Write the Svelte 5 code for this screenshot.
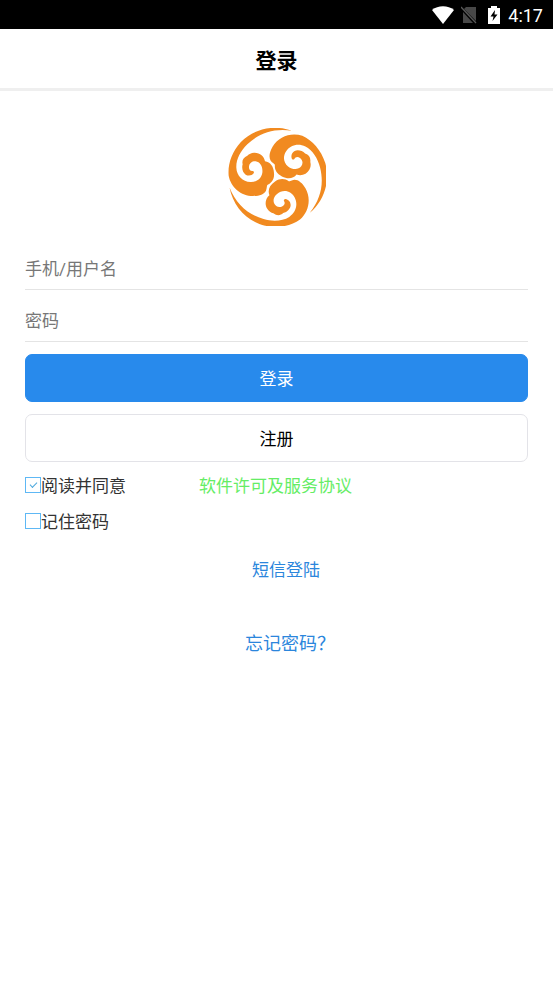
<script>
	let username = $state('');
	let password = $state('');
	let agreed = $state(true);
	let remember = $state(false);

	// the emblem is one cloud swirl repeated around the centre
	const swirls = [0, 120, 240];
</script>

<div class="page">
	<div class="status-bar">
		<svg class="wifi" viewBox="0 0 22 18" aria-hidden="true">
			<path d="M0 4C6-1 16-1 22 4L11 18Z" fill="#fff" />
		</svg>
		<svg class="sim" viewBox="0 0 16 18" aria-hidden="true">
			<path d="M5 1H15V15L3 3ZM2 6L12 17H2Z" fill="#484848" />
			<path d="M0 1L15 17" stroke="#5a5a5a" stroke-width="1.2" />
		</svg>
		<svg class="battery" viewBox="0 0 12 18" aria-hidden="true">
			<path d="M3 0H9V2H12V18H0V2H3Z" fill="#fff" />
			<path d="M7 4L2.500 10.500H5.500L4.500 15L9.500 8.500H6.500Z" fill="#000" />
		</svg>
		<span class="clock">4:17</span>
	</div>

	<header class="title-bar">
		<h1>登录</h1>
	</header>

	<main>
		<svg class="logo" viewBox="3 3 294 294" role="img" aria-label="logo">
			{#each swirls as angle (angle)}
				<path
					transform="rotate({angle} 150 150)"
					fill="#f18a20"
					d="M194 11C140-8 80 5 41 46C14 76 2 112 5 146C11 180 42 207 78 207C96 207 111 202 117 191C120 183 119 178 121 174C133 169 143 157 141 138C140 119 130 105 114 103C112 88 98 76 81 77C73 77 66 81 61 86C49 91 44 101 47 112C43 124 48 138 56 143C64 148 75 146 80 139C82 136 80 132 77 132C70 133 65 127 66 119C67 108 76 102 86 103C100 105 108 120 106 137C103 155 88 166 70 165C47 164 29 146 28 122C27 98 40 72 61 52C96 18 141 3 194 11Z"
				/>
			{/each}
		</svg>

		<form onsubmit={(event) => event.preventDefault()}>
			<input class="field" type="text" placeholder="手机/用户名" aria-label="手机/用户名" bind:value={username} />
			<input class="field" type="password" placeholder="密码" aria-label="密码" bind:value={password} />
			<button class="btn btn--primary" type="submit">登录</button>
			<button class="btn" type="button">注册</button>

			<div class="option-row">
				<label class="option">
					<input type="checkbox" bind:checked={agreed} />
					<span>阅读并同意</span>
				</label>
				<a class="agreement" href="#agreement">软件许可及服务协议</a>
			</div>
			<div class="option-row">
				<label class="option">
					<input type="checkbox" bind:checked={remember} />
					<span>记住密码</span>
				</label>
			</div>
		</form>

		<nav class="links">
			<a href="#sms">短信登陆</a>
			<a class="forgot" href="#forgot">忘记密码？</a>
		</nav>
	</main>
</div>

<style>
	:global(body) {
		margin: 0;
		background: #fff;
	}

	.page {
		min-height: 100vh;
		font-family: Roboto, 'Noto Sans CJK SC', sans-serif;
		font-size: 17px;
		line-height: 24px;
		color: #333;
	}

	.status-bar {
		display: flex;
		align-items: center;
		justify-content: flex-end;
		height: 29px;
		padding-right: 10px;
		background: #000;
		color: #fff;
	}

	.wifi {
		width: 22px;
		height: 18px;
		margin-right: 7px;
	}

	.sim {
		width: 16px;
		height: 18px;
		margin-right: 11px;
	}

	.battery {
		width: 12px;
		height: 18px;
		margin-right: 8px;
	}

	.clock {
		padding-top: 2px;
		font-size: 18px;
	}

	.title-bar {
		box-sizing: border-box;
		height: 62px;
		padding-top: 20px;
		border-bottom: 3px solid #efefef;
		text-align: center;
	}

	h1 {
		margin: 0;
		font-size: 21px;
		font-weight: 700;
		color: #000;
	}

	main {
		padding: 37px 25px 0;
	}

	.logo {
		display: block;
		width: 98px;
		height: 98px;
		margin: 0 auto 22px;
	}

	form {
		display: flex;
		flex-direction: column;
	}

	.field {
		box-sizing: border-box;
		width: 100%;
		height: 42px;
		margin-bottom: 10px;
		padding: 0;
		border: 0;
		border-bottom: 1px solid #e4e4e4;
		background: none;
		font: inherit;
		outline: none;
	}

	.field::placeholder {
		color: #777;
		opacity: 1;
	}

	.btn {
		height: 48px;
		margin: 2px 0 10px;
		padding: 2px 0 0;
		border: 1px solid #e3e3e8;
		border-radius: 7px;
		background: #fff;
		font: inherit;
		color: #000;
	}

	.btn--primary {
		border-color: #288aec;
		background: #288aec;
		color: #fff;
	}

	.option-row {
		display: flex;
		align-items: center;
		height: 24px;
		margin: 2px 0 10px;
	}

	.option {
		display: flex;
		align-items: center;
	}

	.option input {
		appearance: none;
		display: grid;
		place-items: center;
		box-sizing: border-box;
		width: 16px;
		height: 16px;
		margin: 0 0 2px;
		border: 1px solid #5eb8f5;
	}

	.option input:checked::before {
		content: '';
		width: 6px;
		height: 3px;
		border: solid #4da9dd;
		border-width: 0 0 1px 1px;
		transform: translateY(-1px) rotate(-45deg);
	}

	.agreement {
		margin-left: 73px;
		color: #65ed65;
		text-decoration: none;
	}

	.links {
		display: flex;
		flex-direction: column;
		align-items: center;
		gap: 50px;
		padding: 14px 0 0 19px;
	}

	.links a {
		color: #2b86dc;
		text-decoration: none;
	}

	.links .forgot {
		padding-left: 8px;
		font-size: 18px;
	}
</style>
